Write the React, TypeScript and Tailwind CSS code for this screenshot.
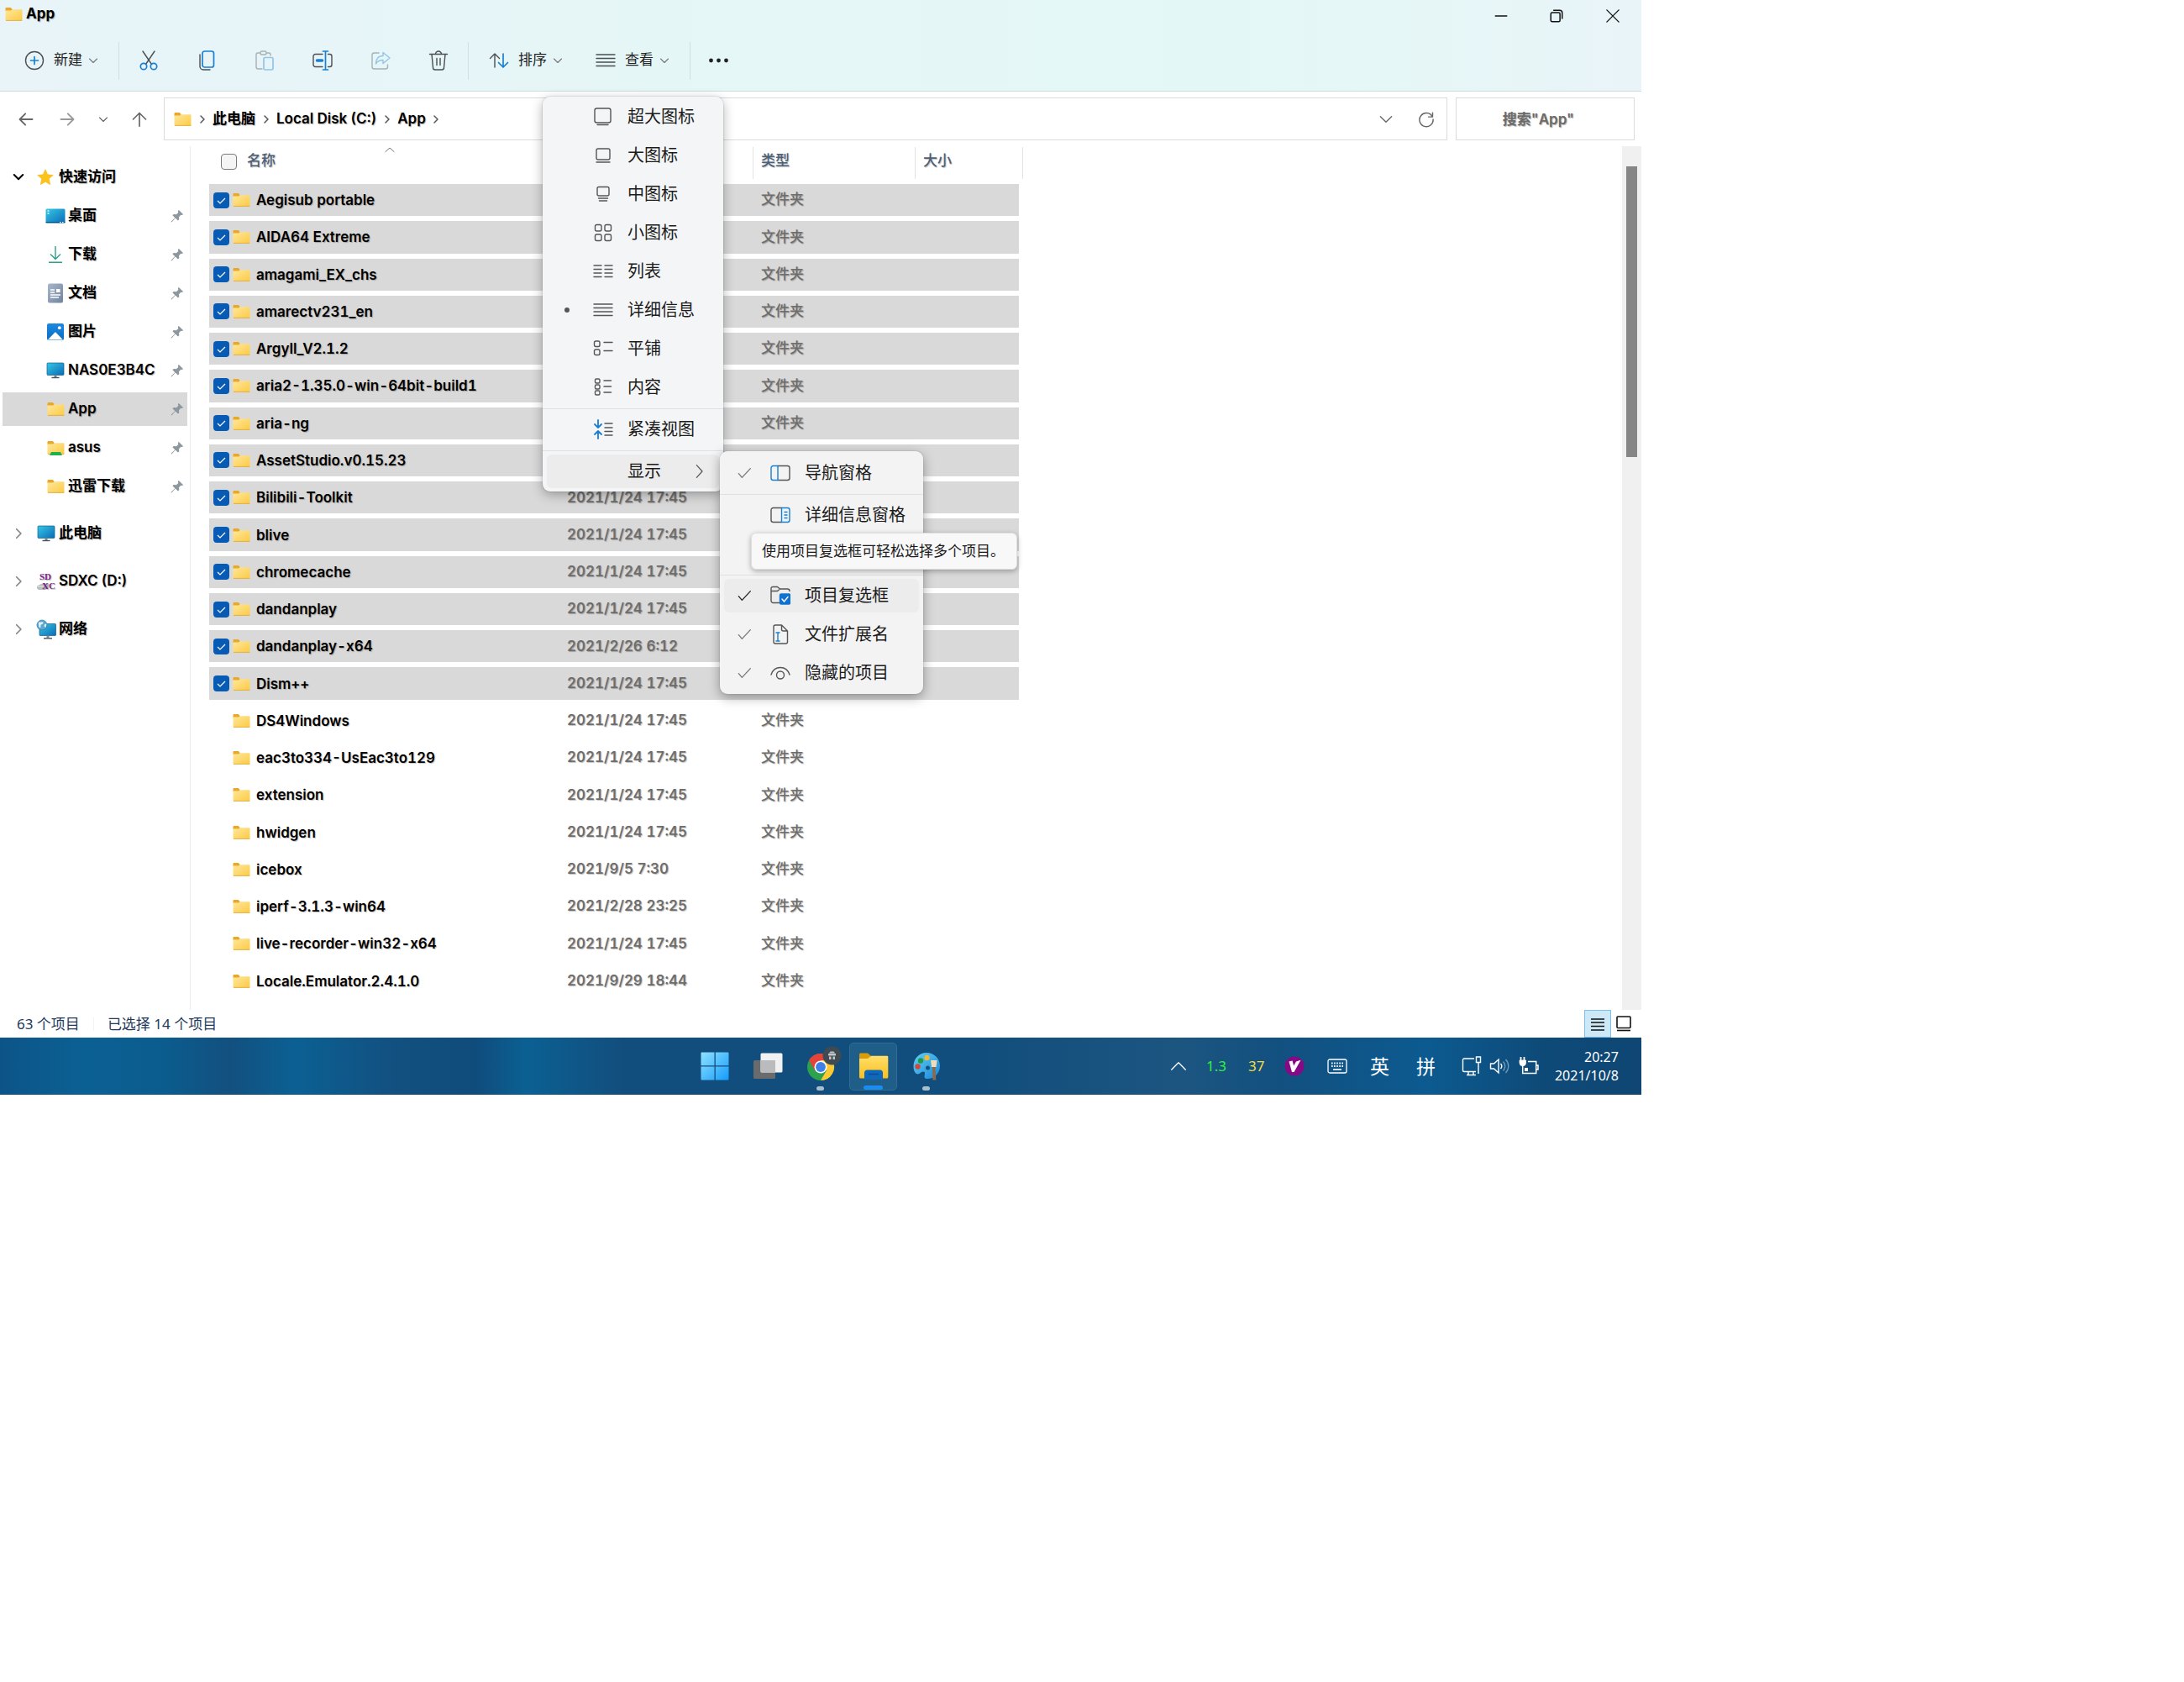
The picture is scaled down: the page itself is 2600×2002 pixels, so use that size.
import type { ReactNode } from "react";

const files = [
  { name: "Aegisub portable", date: "", selected: true },
  { name: "AIDA64 Extreme", date: "", selected: true },
  { name: "amagami_EX_chs", date: "", selected: true },
  { name: "amarectv231_en", date: "", selected: true },
  { name: "Argyll_V2.1.2", date: "", selected: true },
  { name: "aria2-1.35.0-win-64bit-build1", date: "", selected: true },
  { name: "aria-ng", date: "", selected: true },
  { name: "AssetStudio.v0.15.23", date: "", selected: true },
  { name: "Bilibili-Toolkit", date: "2021/1/24 17:45", selected: true },
  { name: "blive", date: "2021/1/24 17:45", selected: true },
  { name: "chromecache", date: "2021/1/24 17:45", selected: true },
  { name: "dandanplay", date: "2021/1/24 17:45", selected: true },
  { name: "dandanplay-x64", date: "2021/2/26 6:12", selected: true },
  { name: "Dism++", date: "2021/1/24 17:45", selected: true },
  { name: "DS4Windows", date: "2021/1/24 17:45", selected: false },
  { name: "eac3to334-UsEac3to129", date: "2021/1/24 17:45", selected: false },
  { name: "extension", date: "2021/1/24 17:45", selected: false },
  { name: "hwidgen", date: "2021/1/24 17:45", selected: false },
  { name: "icebox", date: "2021/9/5 7:30", selected: false },
  { name: "iperf-3.1.3-win64", date: "2021/2/28 23:25", selected: false },
  { name: "live-recorder-win32-x64", date: "2021/1/24 17:45", selected: false },
  { name: "Locale.Emulator.2.4.1.0", date: "2021/9/29 18:44", selected: false },
];

type IconProps = { children: ReactNode; size?: number; className?: string };

// Thin line icon on a 24 grid
function Line({ children, size = 24, className = "" }: IconProps) {
  return (
    <svg
      width={size}
      height={size}
      viewBox="0 0 24 24"
      fill="none"
      stroke="currentColor"
      strokeWidth="1.4"
      strokeLinecap="round"
      strokeLinejoin="round"
      className={`shrink-0 ${className}`}
      aria-hidden="true"
    >
      {children}
    </svg>
  );
}

function Gradients() {
  return (
    <svg width="0" height="0" className="absolute" aria-hidden="true">
      <defs>
        <linearGradient id="folder" x1="0" y1="0" x2="1" y2="1">
          <stop offset="0" stopColor="#ffe79c" />
          <stop offset="1" stopColor="#fccb45" />
        </linearGradient>
        <linearGradient id="screen" x1="0" y1="0" x2="1" y2="1">
          <stop offset="0" stopColor="#35c8e6" />
          <stop offset="1" stopColor="#0b6bb5" />
        </linearGradient>
        <linearGradient id="photo" x1="0" y1="0" x2="0" y2="1">
          <stop offset="0" stopColor="#1a8ae0" />
          <stop offset="1" stopColor="#0b6cc4" />
        </linearGradient>
        <linearGradient id="doc" x1="0" y1="0" x2="1" y2="1">
          <stop offset="0" stopColor="#a7b7cc" />
          <stop offset="1" stopColor="#71839f" />
        </linearGradient>
        <linearGradient id="win" x1="0" y1="0" x2="1" y2="1">
          <stop offset="0" stopColor="#8fe3ff" />
          <stop offset="1" stopColor="#159bfb" />
        </linearGradient>
        <linearGradient id="palette" x1="0" y1="0" x2="1" y2="1">
          <stop offset="0" stopColor="#5fd0f5" />
          <stop offset="1" stopColor="#1c86d8" />
        </linearGradient>
        <linearGradient id="bigfolder" x1="0" y1="0" x2="0" y2="1">
          <stop offset="0" stopColor="#ffdf6b" />
          <stop offset="1" stopColor="#fbbf1c" />
        </linearGradient>
      </defs>
    </svg>
  );
}

function Folder({ shared = false }: { shared?: boolean }) {
  return (
    <svg width="21" height="18" viewBox="0 0 21 18" className="shrink-0" aria-hidden="true">
      <path d="M0.5 2.2C0.5 1.4 1 1 1.8 1h5l2 2.2-1.6 2H0.5z" fill="#e8a92a" />
      <path d="M0.5 4.6h6.6l2-1.4h10.4c.6 0 1 .4 1 1v11.3c0 .7-.4 1-1 1h-18c-.6 0-1-.3-1-1z" fill="url(#folder)" />
      <path d="M1 16.4h19.4" stroke="#e2ab34" strokeWidth="0.9" />
      {shared && <path d="M5 14h11l2 4H3z" fill="#21b14b" />}
    </svg>
  );
}

function Monitor() {
  return (
    <svg width="22" height="20" viewBox="0 0 22 20" className="shrink-0" aria-hidden="true">
      <rect x="1" y="1" width="20" height="14.5" rx="1" fill="url(#screen)" stroke="#0d5f8f" strokeWidth="0.7" />
      <path d="M9.5 15.5h3V18h-3z" fill="#7b8a95" />
      <path d="M6.5 18.5h9" stroke="#44525c" strokeWidth="1.4" />
    </svg>
  );
}

function DesktopIcon() {
  return (
    <svg width="24" height="18" viewBox="0 0 24 18" className="-mx-px shrink-0" aria-hidden="true">
      <rect x="0.5" y="0.5" width="23" height="17" rx="1.5" fill="url(#screen)" />
      <path d="M2.5 3h2M2.5 6h2" stroke="#d5f6ff" strokeWidth="1.4" />
      <path d="M0.5 16.6h23" stroke="#0a4f82" strokeWidth="1.2" />
      <path d="M17 16.6h1.5M20 16.6h1.5" stroke="#fff" strokeWidth="1.2" />
    </svg>
  );
}

function DownloadIcon() {
  return (
    <svg width="22" height="22" viewBox="0 0 22 22" fill="none" stroke="#2f9e8c" strokeWidth="1.4" className="shrink-0" aria-hidden="true">
      <path d="M11 1v15M5 10.5l6 6 6-6M3 20.2h16" />
    </svg>
  );
}

function DocumentIcon() {
  return (
    <svg width="22" height="24" viewBox="0 0 22 24" className="shrink-0" aria-hidden="true">
      <rect x="2" y="0.5" width="18" height="23" rx="2" fill="url(#doc)" />
      <path d="M5 8h5M5 11h5M5 14h12M5 17h10" stroke="#fff" strokeWidth="1.3" />
      <path d="M12 7h4.5v4H12z" fill="#fff" />
    </svg>
  );
}

function PictureIcon() {
  return (
    <svg width="22" height="20" viewBox="0 0 22 20" className="shrink-0" aria-hidden="true">
      <rect x="1" y="0" width="20" height="20" rx="2" fill="url(#photo)" />
      <circle cx="15.8" cy="5.2" r="1.9" fill="#fff" />
      <path d="M1.8 19.6L10 11c.5-.6 1.3-.6 1.8 0l8.2 8.6z" fill="#fff" />
    </svg>
  );
}

function StarIcon() {
  return (
    <svg width="20" height="20" viewBox="0 0 20 20" className="shrink-0" aria-hidden="true">
      <path d="M10 0.8l2.7 6 6.5.7-4.9 4.3 1.4 6.9-5.7-3.4-5.7 3.4 1.4-6.9L0.8 7.5l6.5-.7z" fill="#fcc419" stroke="#f5b50a" strokeWidth="0.6" strokeLinejoin="round" />
    </svg>
  );
}

function SdCardIcon() {
  return (
    <svg width="24" height="24" viewBox="0 0 24 24" className="-mx-0.5 shrink-0" aria-hidden="true">
      <path d="M1 17.5l5-2.5h9v4.5l-4 2.5H3l-2-1.5z" fill="#b9bcc0" />
      <path d="M1 18h9l5-3" stroke="#e8eaec" fill="none" />
      <text x="4" y="10" fontSize="11" fontFamily="Liberation Serif, serif" fill="#7a1f86">SD</text>
      <text x="7" y="21" fontSize="11" fontWeight="700" fontFamily="Liberation Serif, serif" fill="#7a1f86">XC</text>
    </svg>
  );
}

function NetworkIcon() {
  return (
    <svg width="24" height="24" viewBox="0 0 24 24" className="-mx-0.5 shrink-0" aria-hidden="true">
      <rect x="4" y="5.5" width="19.5" height="14" rx="0.8" fill="url(#screen)" stroke="#0d5f8f" strokeWidth="0.7" />
      <path d="M12.5 19.5h3V22h-3z" fill="#7b8a95" />
      <path d="M9 22.8h10" stroke="#44525c" strokeWidth="1.4" />
      <circle cx="7" cy="7" r="6" fill="#5aa7cf" stroke="#34779f" strokeWidth="0.7" />
      <path d="M3 3.5c2 .5 3.5-1 5 0s-.5 2.5-2 3 .5 2.5-1 3.5S2.5 6 3 3.5zM10 6l2.5-.5-1 4.5-2-1.5z" fill="#dff0f7" />
    </svg>
  );
}

function Pin() {
  return (
    <svg width="16" height="16" viewBox="0 0 16 16" className="ml-auto shrink-0" aria-hidden="true">
      <path d="M9.6 0.8l5.6 5.4-1.7.7-1.1-.2-2.4 2.5.3 3.1-1.4 1.3-3.1-3-4.2 4.6-.9.2.2-1L5.3 10.2 2.4 7.3l1.3-1.2 3.2.2 2.4-2.4-.4-1.5z" fill="#8d979f" />
    </svg>
  );
}

const chevronDown = <path d="M3 8l9 9 9-9" strokeWidth="2.2" />;
const chevronRight = <path d="M8 4l8 8-8 8" strokeWidth="3" />;

const quickAccess = [
  { label: "桌面", icon: <DesktopIcon /> },
  { label: "下载", icon: <DownloadIcon /> },
  { label: "文档", icon: <DocumentIcon /> },
  { label: "图片", icon: <PictureIcon /> },
  { label: "NAS0E3B4C", icon: <Monitor /> },
  { label: "App", icon: <Folder />, active: true },
  { label: "asus", icon: <Folder shared /> },
  { label: "迅雷下载", icon: <Folder /> },
];

const drives = [
  { label: "此电脑", icon: <Monitor /> },
  { label: "SDXC (D:)", icon: <SdCardIcon /> },
  { label: "网络", icon: <NetworkIcon /> },
];

const viewModes = [
  { label: "超大图标", icon: <><rect x="2" y="2" width="19" height="17" rx="2.5" /><path d="M5 21.5h13" /></> },
  { label: "大图标", icon: <><rect x="4" y="4" width="16" height="13" rx="2" /><path d="M4 20h16" /></> },
  { label: "中图标", icon: <><rect x="5" y="3.5" width="14" height="10.5" rx="2" /><path d="M6.5 17h11M7.5 20h9" /></> },
  {
    label: "小图标",
    icon: (
      <>
        <rect x="2.5" y="2.5" width="7.5" height="7.5" rx="2" />
        <rect x="14" y="2.5" width="7.5" height="7.5" rx="2" />
        <rect x="2.5" y="14" width="7.5" height="7.5" rx="2" />
        <rect x="14" y="14" width="7.5" height="7.5" rx="2" />
      </>
    ),
  },
  { label: "列表", icon: <path d="M1 5h9M1 9.5h9M1 14h9M1 18.5h9M14 5h9M14 9.5h9M14 14h9M14 18.5h9" /> },
  { label: "详细信息", icon: <path d="M1 5h22M1 9.5h22M1 14h22M1 18.5h22" />, current: true },
  {
    label: "平铺",
    icon: (
      <>
        <rect x="1.5" y="3" width="6.5" height="6.5" rx="1.8" />
        <rect x="1.5" y="13" width="6.5" height="6.5" rx="1.8" />
        <path d="M13 4.5h10M13 14.5h10" />
      </>
    ),
  },
  {
    label: "内容",
    icon: (
      <>
        <rect x="2.5" y="2" width="5.5" height="5" rx="1.5" />
        <rect x="2.5" y="9" width="5.5" height="5" rx="1.5" />
        <rect x="2.5" y="16" width="5.5" height="5" rx="1.5" />
        <path d="M13 4h8.5M13 11h8.5M13 18h8.5" />
      </>
    ),
  },
];

function MenuItem({ label, icon, mark, active = false, arrow = false }: { label: string; icon?: ReactNode; mark?: ReactNode; active?: boolean; arrow?: boolean }) {
  return (
    <button type="button" className="flex h-[46px] w-full items-center px-[5px] text-left">
      <span className={`flex h-10 w-full items-center rounded-md ${active ? "bg-[#ececec]" : ""}`}>
        <span className="flex w-[48px] justify-center">{mark}</span>
        <span className="mx-[7px] flex w-6 justify-center text-[#555]">{icon && <Line>{icon}</Line>}</span>
        <span className="ml-[10px] whitespace-nowrap">{label}</span>
        {arrow && <Line size={16} className="mr-4 ml-auto text-[#555]"><path d="M8 1l10 11L8 23" strokeWidth="1.8" /></Line>}
      </span>
    </button>
  );
}

function MenuRule() {
  return <div className="flex h-1 flex-col justify-center"><div className="h-px bg-[#e0e0e0]" /></div>;
}

function Check({ strong = false }: { strong?: boolean }) {
  return (
    <Line size={16} className={strong ? "text-[#222]" : "text-[#777]"}>
      <path d="M2 13l6 7L23 4" strokeWidth="2" />
    </Line>
  );
}

function ShowMenu() {
  return (
    <div className="absolute -top-px left-[211px] z-20 w-[242px] rounded-[9px] bg-[#f3f3f3] pt-[3px] pb-[2px] shadow-[0_4px_14px_rgba(0,0,0,0.35),0_0_1px_1px_rgba(0,0,0,0.06)]">
      <MenuItem label="导航窗格" mark={<Check />} icon={<><path d="M9 3.5h11.5a2.5 2.5 0 0 1 2.5 2.5v12a2.5 2.5 0 0 1-2.5 2.5H9" /><path d="M9 3.5H3.5A2.5 2.5 0 0 0 1 6v12a2.5 2.5 0 0 0 2.5 2.5H9z" stroke="#1a7fd0" /></>} />
      <MenuRule />
      <MenuItem label="详细信息窗格" icon={<><path d="M13.5 3.5H3.5A2.5 2.5 0 0 0 1 6v12a2.5 2.5 0 0 0 2.5 2.5h10" /><path d="M13.5 3.5h7A2.5 2.5 0 0 1 23 6v12a2.5 2.5 0 0 1-2.5 2.5h-7zM17 8.5h3M17 12h3M17 15.5h3" stroke="#1a7fd0" /></>} />
      <div className="h-[46px]" />
      <MenuRule />
      <div className="relative">
        <MenuItem
          active
          label="项目复选框"
          mark={<Check strong />}
          icon={<><path d="M10.5 20.5H3.5A2.5 2.5 0 0 1 1 18V3.5A2 2 0 0 1 3 1.5h5.5l3 2.5h9A2.5 2.5 0 0 1 23 6.5M1 6.5h7.5l3-2.5" /><rect x="11.5" y="10" width="12" height="12" rx="1.5" fill="#0f72d0" stroke="#0f72d0" /><path d="M14 16l2.5 3 4.5-5.5" stroke="#fff" /></>}
        />
        <div role="tooltip" className="absolute -top-[52px] left-[37px] flex h-11 w-[317px] items-center rounded-[6px] border border-[#dedede] bg-[#f8f8f9] pl-3 text-[17px] whitespace-nowrap shadow-[0_2px_6px_rgba(0,0,0,0.3)]">
          使用项目复选框可轻松选择多个项目。
        </div>
      </div>
      <MenuItem label="文件扩展名" mark={<Check />} icon={<><path d="M13.5 1H6a2 2 0 0 0-2 2v18a2 2 0 0 0 2 2h12.5a2 2 0 0 0 2-2V8zM13.5 1v5a2 2 0 0 0 2 2h5" /><path d="M7 10h4M7 20h4M9 10v10" stroke="#1a7fd0" /></>} />
      <MenuItem label="隐藏的项目" mark={<Check />} icon={<><path d="M1 14C3 8 7.5 5.5 12 5.5S21 8 23 14" /><circle cx="12" cy="14.5" r="4.5" /></>} />
    </div>
  );
}

function ViewMenu() {
  return (
    <div className="absolute top-[56px] -left-[63px] z-20 w-[215px] rounded-[9px] bg-[#f4f5f6] py-px text-[20px] text-[#1b1b1b] shadow-[0_4px_14px_rgba(0,0,0,0.3),0_0_1px_1px_rgba(0,0,0,0.08)]">
      {viewModes.map((mode) => (
        <MenuItem key={mode.label} label={mode.label} icon={mode.icon} mark={mode.current && <span className="h-[6px] w-[6px] rounded-full bg-[#555]" />} />
      ))}
      <MenuRule />
      <MenuItem
        label="紧凑视图"
        icon={<><path d="M6 1v8.5M2 6l4 4 4-4M6 23v-8.5M2 18l4-4 4 4" stroke="#1a7fd0" strokeWidth="1.8" /><path d="M14 5h9M14 10h9M14 14.5h9M14 19h9" /></>}
      />
      <MenuRule />
      <div className="relative">
        <MenuItem label="显示" active arrow />
        <ShowMenu />
      </div>
    </div>
  );
}

function ToolButton({ label, disabled = false, children }: { label: string; disabled?: boolean; children: ReactNode }) {
  return (
    <button type="button" aria-label={label} disabled={disabled} className={`flex h-11 w-[69px] items-center justify-center text-[#4b4f52] ${disabled ? "opacity-40" : ""}`}>
      <Line>{children}</Line>
    </button>
  );
}

function Toolbar() {
  return (
    <div className="flex h-[72px] items-center pl-[29px] text-[17px] text-[#222]">
      <button type="button" className="flex items-center">
        <Line className="text-[#4b4f52]"><circle cx="12" cy="12" r="10.5" /><path d="M12 7.5v9M7.5 12h9" stroke="#1a7fd0" strokeWidth="1.7" /></Line>
        <span className="mr-[7px] ml-[11px]">新建</span>
        <Line size={12} className="text-[#777]">{chevronDown}</Line>
      </button>
      <div className="ml-6 h-[45px] w-px bg-[#d3dfe3]" />
      <div className="flex">
        <ToolButton label="剪切">
          <path d="M5 1l10.5 15.5M19 1L8.5 16.5" />
          <circle cx="6" cy="19" r="3.7" stroke="#1a7fd0" strokeWidth="1.7" />
          <circle cx="18" cy="19" r="3.7" stroke="#1a7fd0" strokeWidth="1.7" />
        </ToolButton>
        <ToolButton label="复制">
          <path d="M4 5v14a4 4 0 0 0 4 4h8" />
          <rect x="7" y="1" width="13.5" height="19" rx="2.5" stroke="#1a7fd0" strokeWidth="1.7" />
        </ToolButton>
        <ToolButton label="粘贴" disabled>
          <path d="M9 22H4.5A2.5 2.5 0 0 1 2 19.5V5a2 2 0 0 1 2-2h3M14 3h3a2 2 0 0 1 2 2v1" />
          <rect x="7" y="1" width="7" height="4" rx="1.5" />
          <rect x="11" y="8.5" width="11" height="14.5" rx="1.5" stroke="#1a7fd0" strokeWidth="1.7" />
        </ToolButton>
        <ToolButton label="重命名">
          <path d="M12 4.5H3.5A2.5 2.5 0 0 0 1 7v10a2.5 2.5 0 0 0 2.5 2.5H12M18.5 4.5h2A2.5 2.5 0 0 1 23 7v10a2.5 2.5 0 0 1-2.5 2.5h-2" />
          <path d="M15.500 1v22M12.5 1h6M12.5 23h6" stroke="#1a7fd0" strokeWidth="1.7" />
          <path d="M5.5 12h6" stroke="#1a7fd0" strokeWidth="3.5" />
        </ToolButton>
        <ToolButton label="共享" disabled>
          <path d="M10 3H4.5A2.5 2.5 0 0 0 2 5.5v14A2.5 2.5 0 0 0 4.5 22H18a2.5 2.5 0 0 0 2.5-2.5V17" />
          <path d="M15 2.5L23 9l-8 6.5v-4c-4 0-6.5 1-8.5 4.5 0-6 3-9.5 8.5-9.5z" stroke="#1a7fd0" />
        </ToolButton>
        <ToolButton label="删除">
          <path d="M1.5 4.5h21M8.5 4.5a3.5 3.5 0 0 1 7 0M4 4.5l1.5 16A2.5 2.5 0 0 0 8 23h8a2.5 2.5 0 0 0 2.5-2.5l1.5-16M10 9.5v8M14 9.5v8" />
        </ToolButton>
      </div>
      <div className="ml-px h-[45px] w-px bg-[#d3dfe3]" />
      <button type="button" className="ml-6 flex items-center">
        <Line className="text-[#4b4f52]"><path d="M7 20V4M1.5 9.5L7 4l5.5 5.5" /><path d="M17 4v16M11.5 14.5L17 20l5.5-5.5" stroke="#1a7fd0" strokeWidth="1.7" /></Line>
        <span className="mr-[7px] ml-[11px]">排序</span>
        <Line size={12} className="text-[#777]">{chevronDown}</Line>
      </button>
      <div className="relative ml-[39px]">
        <button type="button" aria-haspopup="menu" aria-expanded="true" className="flex items-center">
          <Line className="text-[#4b4f52]"><path d="M1 5h22M1 9.5h22M1 14h22M1 18.5h22" /></Line>
          <span className="mr-[7px] ml-[11px]">查看</span>
          <Line size={12} className="text-[#777]">{chevronDown}</Line>
        </button>
        <ViewMenu />
      </div>
      <div className="ml-6 h-[45px] w-px bg-[#d3dfe3]" />
      <button type="button" aria-label="更多" className="ml-5 text-[#222]">
        <svg width="28" height="12" viewBox="0 0 28 12" fill="currentColor" aria-hidden="true"><circle cx="4.5" cy="6" r="2.4" /><circle cx="13.5" cy="6" r="2.4" /><circle cx="22.5" cy="6" r="2.4" /></svg>
      </button>
    </div>
  );
}

function WindowHeader() {
  return (
    <header className="border-b border-[#cfdcdf] bg-linear-to-r from-[#e8f4f8] via-[#e3f8f6] via-75% to-[#e9f4f8]">
      <div className="flex h-9 items-center">
        <h1 className="flex items-center gap-1 pb-[3px] pl-[6px] text-[17px] leading-none font-bold text-black [text-shadow:1px_1px_1px_rgba(0,0,0,0.3)]"><Folder />App</h1>
        <div className="ml-auto flex pt-[2px] text-[#111]">
          <button type="button" aria-label="最小化" className="flex w-[66px] justify-center"><Line size={18}><path d="M3 12h18" strokeWidth="2" /></Line></button>
          <button type="button" aria-label="还原" className="flex w-[66px] justify-center"><Line size={18}><rect x="3" y="6.5" width="14.5" height="14.5" rx="2" strokeWidth="2" /><path d="M7.5 3H17a4 4 0 0 1 4 4v9" strokeWidth="2" /></Line></button>
          <button type="button" aria-label="关闭" className="flex w-[68px] justify-center"><Line size={18}><path d="M2.5 2.5l19 19M21.5 2.5l-19 19" strokeWidth="1.8" /></Line></button>
        </div>
      </div>
      <Toolbar />
    </header>
  );
}

function AddressRow() {
  const separator = <span className="flex w-[25px] justify-center"><Line size={12} className="text-[#555]">{chevronRight}</Line></span>;
  return (
    <div className="flex h-[59px] pt-[7px] pr-2 pl-[7px]">
      <div className="flex h-[51px] w-[188px] items-center text-[#666]">
        <button type="button" aria-label="后退" className="flex w-[48px] justify-center"><Line size={20}><path d="M21 12H4M11 4l-8 8 8 8" strokeWidth="2.2" /></Line></button>
        <button type="button" aria-label="前进" className="flex w-[49px] justify-center text-[#999]"><Line size={20}><path d="M3 12h17M13 4l8 8-8 8" strokeWidth="2.2" /></Line></button>
        <button type="button" aria-label="最近位置" className="flex w-[38px] justify-center"><Line size={12}>{chevronDown}</Line></button>
        <button type="button" aria-label="上移" className="flex w-[48px] justify-center"><Line size={20}><path d="M12 22V4M3 12l9-9 9 9" strokeWidth="2" /></Line></button>
      </div>
      <nav className="flex h-[51px] flex-1 items-center border border-[#dcdcdc] pl-[11px] text-[17px] font-semibold text-black [text-shadow:1px_1px_1px_rgba(0,0,0,0.3)]">
        <Folder />
        {separator}<a href="#pc">此电脑</a>
        {separator}<a href="#c">Local Disk (C:)</a>
        {separator}<a href="#app">App</a>
        {separator}
        <button type="button" aria-label="历史记录" className="ml-auto flex w-[48px] justify-center text-[#666]"><Line size={16}><path d="M2 7l10 10L22 7" strokeWidth="2" /></Line></button>
        <button type="button" aria-label="刷新" className="flex w-[48px] justify-center text-[#666]"><Line size={20}><path d="M20.5 8A9.7 9.7 0 1 0 21.7 12M21 2.5V8.5h-6" strokeWidth="1.7" /></Line></button>
      </nav>
      <input
        type="text"
        aria-label="搜索"
        placeholder={'搜索"App"'}
        className="ml-[10px] h-[51px] w-[213px] border border-[#dcdcdc] pr-4 text-center text-[17px] font-semibold [text-shadow:1px_1px_1px_rgba(0,0,0,0.3)] placeholder:text-[#6b6b6b]"
      />
    </div>
  );
}

function Sidebar() {
  return (
    <nav className="mt-[6px] w-[227px] shrink-0 border-r border-[#ececec] pt-[14px] text-[17px] font-semibold text-black [text-shadow:1px_1px_1px_rgba(0,0,0,0.3)]">
      <a href="#quick" className="flex h-[46px] items-center pl-[15px]">
        <Line size={14}><path d="M3 7l9 9 9-9" strokeWidth="3.5" /></Line>
        <span className="mr-[6px] ml-[15px]"><StarIcon /></span>
        快速访问
      </a>
      {quickAccess.map((item) => (
        <a key={item.label} href="#folder" className="flex h-[46px] items-center pr-[3px] pl-[3px]">
          <span className={`flex h-10 w-full items-center gap-1 pr-1 pl-[52px] ${item.active ? "bg-[#d9d9d9]" : ""}`}>
            <span className="flex w-[22px] justify-center">{item.icon}</span>
            <span>{item.label}</span>
            <Pin />
          </span>
        </a>
      ))}
      <div className="mt-1">
        {drives.map((item) => (
          <a key={item.label} href="#drive" className="flex h-[57px] items-center pl-[15px]">
            <Line size={14} className="text-[#888]"><path d="M8 3l9 9-9 9" strokeWidth="3" /></Line>
            <span className="mr-1 ml-[14px] flex w-[23px] justify-center">{item.icon}</span>
            {item.label}
          </a>
        ))}
      </div>
    </nav>
  );
}

function FileTable() {
  return (
    <div className="flex min-w-0 flex-1 pl-[22px]">
      <table className="mt-px h-[1024px] w-[964px] table-fixed border-separate border-spacing-x-0 border-spacing-y-[6px] text-left text-[17px] font-semibold text-[#6d6d6d] tabular-nums [text-shadow:1px_1px_1px_rgba(0,0,0,0.25)]">
        <colgroup>
          <col className="w-[416px]" />
          <col className="w-[231px]" />
          <col className="w-[193px]" />
          <col />
        </colgroup>
        <thead>
          <tr className="h-[38px] text-[#4c607a]">
            <th scope="col" className="relative p-0 pb-1 font-medium">
              <Line size={12} className="absolute -top-0.5 left-[209px] text-[#666]"><path d="M2 15l10-9 10 9" strokeWidth="1.8" /></Line>
              <label className="flex items-center gap-3 pl-[14px]">
                <input type="checkbox" className="h-[19px] w-[19px] appearance-none rounded-[4px] border border-[#7a7a7a] bg-[#f5f5f5]" />
                名称
              </label>
            </th>
            <th scope="col" className="p-0" aria-label="修改日期" />
            <th scope="col" className="border-l border-[#e3e3e3] p-0 pb-1 pl-[9px] font-medium">类型</th>
            <th scope="col" className="border-l border-[#e3e3e3] p-0 pb-1 pl-[9px] font-medium">大小</th>
          </tr>
        </thead>
        <tbody>
          {files.map((file) => (
            <tr key={file.name} className={file.selected ? "bg-[#d9d9d9]" : ""}>
              <td className="p-0 text-black">
                <label className="flex items-center pl-[5px] leading-6">
                  <span className="relative h-[19px] w-[19px]">
                    <input type="checkbox" defaultChecked={file.selected} className="peer absolute inset-0 appearance-none rounded-[4px] checked:bg-[#085bb4]" />
                    {file.selected && (
                      <svg width="19" height="19" viewBox="0 0 19 19" fill="none" stroke="#fff" strokeWidth="1.2" className="pointer-events-none absolute inset-0" aria-hidden="true">
                        <path d="M5 10l3 3 6-6" />
                      </svg>
                    )}
                  </span>
                  <span className="mr-[7px] ml-1"><Folder /></span>
                  {file.name}
                </label>
              </td>
              <td className="p-0 pl-[10px]">{file.date}</td>
              <td className="p-0 pl-[10px] font-medium">文件夹</td>
              <td className="p-0" />
            </tr>
          ))}
        </tbody>
      </table>
      <div className="mt-[7px] ml-1 h-[38px] w-px bg-[#e3e3e3]" />
    </div>
  );
}

function StatusBar() {
  return (
    <div className="flex h-[33px] items-center pr-[5px] pl-5 text-[17px] text-[#1e395b]">
      <span>63 个项目</span>
      <span className="mr-4 ml-4 h-4 w-px bg-[#f3f3f3]" />
      <span>已选择 14 个项目</span>
      <div className="ml-auto flex h-full text-[#111]">
        <button type="button" aria-label="详细信息视图" className="flex w-[32px] items-center justify-center border border-[#7fc0e8] bg-[#cde8f6]">
          <svg width="18" height="18" viewBox="0 0 18 18" stroke="currentColor" strokeWidth="1.5" aria-hidden="true"><path d="M1 3h16M1 7h16M1 11.5h16M1 16h16" /></svg>
        </button>
        <button type="button" aria-label="大图标视图" className="flex w-[31px] items-center justify-center">
          <svg width="18" height="19" viewBox="0 0 18 19" fill="none" stroke="currentColor" strokeWidth="1.6" aria-hidden="true"><rect x="1" y="1" width="16" height="13.5" rx="1" /><path d="M1 17.5h16" /></svg>
        </button>
      </div>
    </div>
  );
}

function AppSlot({ label, active = false, running = false, children }: { label: string; active?: boolean; running?: boolean; children: ReactNode }) {
  return (
    <button type="button" aria-label={label} className={`relative flex h-[57px] w-[57px] items-center justify-center rounded-[5px] ${active ? "border border-[#2f6d92] bg-[#1f5e88]" : ""}`}>
      {children}
      {running && <span className={`absolute bottom-0 h-[5px] rounded-full ${active ? "w-[23px] bg-[#1b8cf0]" : "w-[9px] bg-[#a9bfcd]"}`} />}
    </button>
  );
}

function Taskbar() {
  return (
    <footer className="grid h-[68px] grid-cols-[1fr_auto_1fr] items-center bg-[linear-gradient(90deg,#0c5488_0%,#0b6093_5%,#0b5c8e_10%,#12507f_14%,#0b6093_18%,#125080_24%,#0f4c7c_29%,#0b6093_32%,#124e7d_38%,#124e7d_60%,#1c5580_72%,#125080_78%,#0c5a90_87%,#0e4a78_94%,#0f4673_100%)]">
      <div />
      <div className="flex gap-[6px]">
        <AppSlot label="开始">
          <svg width="34" height="34" viewBox="0 0 34 34" aria-hidden="true">
            <path d="M1.5 0.5h15v15.8h-16V1.5q0-1 1-1zM17.8 0.5h14.7q1 0 1 1v14.8H17.8zM0.5 17.6h16v15.9H1.5q-1 0-1-1zM17.8 17.6h15.7v14.9q0 1-1 1H17.8z" fill="url(#win)" />
          </svg>
        </AppSlot>
        <AppSlot label="任务视图">
          <svg width="36" height="34" viewBox="0 0 36 34" aria-hidden="true">
            <rect x="1" y="10" width="26" height="22" rx="1.5" fill="#6a6b6c" />
            <rect x="9.5" y="1.5" width="26" height="23" rx="1.5" fill="#f0f1f2" />
            <path d="M9.5 10H27v14.5H11q-1.5 0-1.5-1.5z" fill="#b9bbbd" />
          </svg>
        </AppSlot>
        <AppSlot label="Chrome" running>
          <svg width="34" height="34" viewBox="0 0 34 34" className="overflow-visible" aria-hidden="true">
            <circle cx="17" cy="18" r="16" fill="#2da14c" />
            <path d="M17 10h13.86A16 16 0 0 1 17 34l7-12z" fill="#fbc934" />
            <path d="M3.14 10A16 16 0 0 1 30.86 10H17L10 22z" fill="#e4433a" />
            <circle cx="17" cy="18" r="7.5" fill="#fff" />
            <circle cx="17" cy="18" r="5.9" fill="#3f7fe8" />
            <circle cx="30.5" cy="4.5" r="11" fill="#3f4a52" />
            <path d="M27 1.5l1.500-2h4l1.500 2zM26 2h9v2.500h-9zM27 5.500h2.500V9H27zM31.500 5.500H34V9h-2.500z" fill="#c3c6c8" />
          </svg>
        </AppSlot>
        <AppSlot label="文件资源管理器" active running>
          <svg width="36" height="34" viewBox="0 0 36 34" aria-hidden="true">
            <path d="M1 3q0-1.5 1.5-1.5H11l3.5 3-2 4H1z" fill="#d99a0b" />
            <path d="M1 8h10l4-3.2h19q1.3 0 1.3 1.3V30q0 1.500-1.3 1.500H2.500Q1 31.500 1 30z" fill="url(#bigfolder)" />
            <path d="M7 33v-8q0-3.500 3.500-3.500h15Q29 21.500 29 25v8z" fill="#1068bd" />
            <path d="M12 26.500h12" stroke="#0a4f93" strokeWidth="1.6" />
          </svg>
        </AppSlot>
        <AppSlot label="画图" running>
          <svg width="34" height="34" viewBox="0 0 34 34" aria-hidden="true">
            <path d="M17 1C8 1 1.5 8 1.5 17c0 5 2 9.5 5 9.5 3 0 3.5-3 6.5-3 3.5 0 1.5 4 1.5 6 0 2 1.5 2.5 3.5 2.5C27 32 33 25 33 16.500S26 1 17 1z" fill="url(#palette)" />
            <circle cx="17.5" cy="7" r="3.2" fill="#f0b83a" />
            <circle cx="10" cy="10.5" r="3.2" fill="#1f9b46" />
            <circle cx="6.5" cy="17.5" r="3.2" fill="#cf4a3e" />
            <circle cx="18.5" cy="19" r="2.5" fill="#14527f" />
            <path d="M22 10h7.5l-1 8H23z" fill="#f0dcb8" />
            <path d="M24 18h3.5l.8 15.5h-4z" fill="#8a6a4d" />
          </svg>
        </AppSlot>
      </div>
      <div className="flex items-center justify-end pr-[27px] text-[17px] text-white">
        <button type="button" aria-label="显示隐藏的图标" className="mr-[23px]"><Line size={20}><path d="M2 17L12 7l10 10" strokeWidth="1.6" /></Line></button>
        <span className="mr-6 w-[26px] text-[#2ff03e]">1.3</span>
        <span className="mr-[23px] w-5 text-[#f1dc3c]">37</span>
        <svg width="24" height="24" viewBox="0 0 24 24" className="mr-[27px] shrink-0" aria-hidden="true">
          <circle cx="12" cy="12" r="11.5" fill="#860a86" />
          <path d="M5.5 6.5l4-1 1.7 6L14 6.5l5.5-1.7L11.5 19H9z" fill="#fff" />
        </svg>
        <svg width="24" height="20" viewBox="0 0 24 20" fill="none" stroke="#fff" strokeWidth="1.3" className="mr-[27px] shrink-0" aria-hidden="true">
          <rect x="1" y="2" width="22" height="16" rx="2" />
          <path d="M5 6.500h14M5 10h14" strokeDasharray="1.6 1.5" strokeWidth="1.8" />
          <path d="M7 14h10" strokeWidth="1.6" />
        </svg>
        <button type="button" aria-label="英" className="mr-8 text-[23px]">英</button>
        <button type="button" aria-label="拼" className="mr-[31px] text-[23px]">拼</button>
        <svg width="24" height="26" viewBox="0 0 24 26" fill="none" stroke="#fff" strokeWidth="1.4" className="mr-[9px] shrink-0" aria-hidden="true">
          <path d="M15 4H3a1.5 1.5 0 0 0-1.5 1.5V18A1.5 1.5 0 0 0 3 19.5h14M8 19.5V23M14 19.5V23M6 23.5h11" />
          <path d="M17.5 2h5v6.5h-5zM20 8.5V22" />
        </svg>
        <svg width="25" height="24" viewBox="0 0 25 24" fill="none" stroke="#fff" strokeWidth="1.4" className="mr-[10px] shrink-0" aria-hidden="true">
          <path d="M1.5 9h4L11 4v16l-5.5-5h-4zM13.5 9a4.5 4.5 0 0 1 0 6" />
          <path d="M16.5 6.5a8 8 0 0 1 0 11M19.5 4a11.5 11.5 0 0 1 0 16" stroke="#6f9ab8" />
        </svg>
        <svg width="24" height="24" viewBox="0 0 24 24" fill="none" stroke="#fff" strokeWidth="1.5" className="mr-[19px] shrink-0" aria-hidden="true">
          <path d="M2.5 1v4M6.5 1v4" strokeWidth="1.8" />
          <path d="M1 5h7.5v3A3.5 3.5 0 0 1 1 8z" fill="#fff" strokeWidth="0.8" />
          <path d="M4.7 11v9.5h16V6.5H11M21 11h2v5h-2" />
          <path d="M7 14h4v4H7z" fill="#fff" stroke="none" />
        </svg>
        <div className="text-right text-[16px] leading-[22px]">
          <div>20:27</div>
          <div>2021/10/8</div>
        </div>
      </div>
    </footer>
  );
}

export default function App() {
  return (
    <div className="min-h-screen bg-white">
      <Gradients />
      <div className="w-[75.15%] bg-white font-['Inter','Noto_Sans_CJK_SC',sans-serif]">
        <WindowHeader />
        <AddressRow />
        <main className="flex min-h-[1034px]">
          <Sidebar />
          <FileTable />
          <div className="mt-[6px] w-[23px] shrink-0 bg-[#f0f0f0] pt-6">
            <div className="mx-auto h-[346px] w-[13px] bg-[#868686]" />
          </div>
        </main>
        <div className="font-['Noto_Sans','Noto_Sans_CJK_SC',sans-serif]">
          <StatusBar />
          <Taskbar />
        </div>
      </div>
    </div>
  );
}
